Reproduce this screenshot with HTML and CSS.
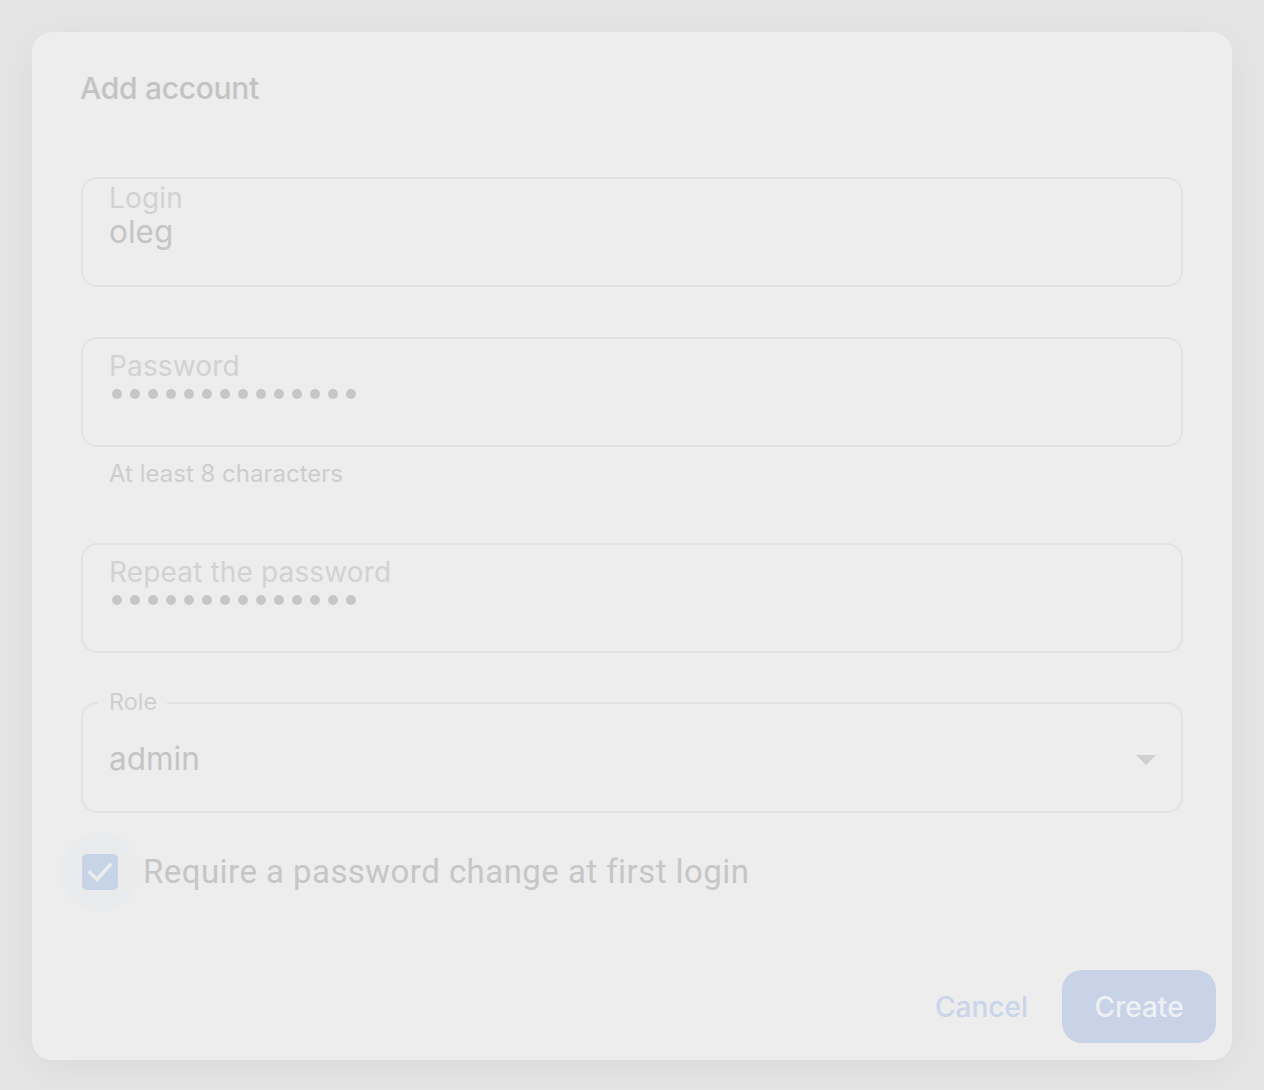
FILE: index.html
```html
<!DOCTYPE html>
<html lang="en">
<head>
<meta charset="utf-8">
<title>Add account</title>
<link rel="stylesheet" href="styles.css">
</head>
<body>
<div class="dialog">
  <h1 class="title">Add account</h1>

  <div class="field field-login">
    <div class="field-label">Login</div>
    <div class="field-value">oleg</div>
  </div>

  <div class="field field-pass">
    <div class="field-label">Password</div>
    <div class="dots"><span></span><span></span><span></span><span></span><span></span><span></span><span></span><span></span><span></span><span></span><span></span><span></span><span></span><span></span></div>
  </div>
  <div class="helper">At least 8 characters</div>

  <div class="field field-pass field-repeat">
    <div class="field-label">Repeat the password</div>
    <div class="dots"><span></span><span></span><span></span><span></span><span></span><span></span><span></span><span></span><span></span><span></span><span></span><span></span><span></span><span></span></div>
  </div>

  <div class="select">
    <span class="legend">Role</span>
    <span class="select-value">admin</span>
    <span class="arrow"></span>
  </div>

  <label class="check-row">
    <span class="checkbox">
      <svg viewBox="0 0 36 36" width="36" height="36"><path d="M8 18.5 L15 25.5 L28 11" fill="none" stroke="#ededed" stroke-width="3.4" stroke-linecap="square"/></svg>
    </span>
    <span class="check-label">Require a password change at first login</span>
  </label>

  <div class="actions">
    <button class="btn-text">Cancel</button>
    <button class="btn-primary">Create</button>
  </div>
</div>
</body>
</html>
```

FILE: styles.css
```css
html, body {
  margin: 0;
  padding: 0;
  background: #e5e5e5;
  font-family: Inter, "Noto Sans", sans-serif;
}

.dialog {
  box-sizing: border-box;
  width: 1200px;
  height: 1028px;
  margin: 32px;
  padding: 38px 49px 17px 49px;
  background: #ededed;
  border-radius: 20px;
  box-shadow: 0 8px 40px rgba(0, 0, 0, 0.05);
  display: flex;
  flex-direction: column;
}

.title {
  margin: 0;
  font-size: 30px;
  line-height: 36px;
  font-weight: 500;
  color: #c3c3c3;
  letter-spacing: -0.3px;
  margin-left: -1px;
}

.field {
  box-sizing: border-box;
  height: 110px;
  border: 2px solid #e2e2e2;
  border-radius: 16px;
  padding: 0 26px;
}

.field-login {
  margin-top: 71px;
  padding-top: 4px;
}

.field-label {
  font-size: 28px;
  line-height: 33px;
  letter-spacing: 0.15px;
  color: #d2d2d2;
}

.field-login .field-label {
  line-height: 30px;
}

.field-value {
  font-size: 31.5px;
  line-height: 38px;
  color: #c5c5c5;
}

.field-pass {
  margin-top: 50px;
  padding-top: 11px;
}

.field-repeat {
  margin-top: 55px;
}

.dots {
  display: flex;
  gap: 8px;
  margin-top: 6px;
  padding-left: 3px;
}

.dots span {
  width: 10px;
  height: 10px;
  border-radius: 50%;
  background: #c6c6c6;
}

.helper {
  margin-top: 12px;
  padding-left: 28px;
  font-size: 24px;
  line-height: 29px;
  color: #cdcdcd;
}

.select {
  position: relative;
  box-sizing: border-box;
  height: 111px;
  margin-top: 49px;
  border: 2px solid #e2e2e2;
  border-radius: 16px;
  padding: 2px 25px 0 26px;
  display: flex;
  align-items: center;
  justify-content: space-between;
}

.legend {
  position: absolute;
  top: -15px;
  left: 15px;
  padding: 0 10px 0 11px;
  background: #ededed;
  font-size: 23.4px;
  line-height: 26px;
  color: #cfcfcf;
}

.select-value {
  font-size: 31.5px;
  line-height: 38px;
  color: #c4c4c4;
}

.arrow {
  width: 0;
  height: 0;
  border-left: 10px solid transparent;
  border-right: 10px solid transparent;
  border-top: 10px solid #d0d0d0;
  margin-top: 2px;
}

.check-row {
  display: flex;
  align-items: center;
  gap: 25px;
  margin-top: 39px;
  padding-left: 1px;
}

.checkbox {
  position: relative;
  width: 36px;
  height: 36px;
  border-radius: 5px;
  background: #c8d3e7;
  display: block;
}

.checkbox::before {
  content: "";
  position: absolute;
  left: -22px;
  top: -22px;
  width: 80px;
  height: 80px;
  border-radius: 50%;
  background: rgba(200, 211, 231, 0.05);
}

.checkbox svg {
  position: relative;
  display: block;
}

.check-label {
  font-family: Roboto, "Liberation Sans", sans-serif;
  font-size: 33px;
  line-height: 39px;
  letter-spacing: 0.45px;
  color: #c6c6c6;
}

.actions {
  margin-top: auto;
  margin-right: -33px;
  display: flex;
  justify-content: flex-end;
  align-items: center;
}

.actions button {
  font-family: Inter, "Noto Sans", sans-serif;
  font-size: 28px;
  font-weight: 500;
  border: none;
  cursor: pointer;
}

.btn-text {
  background: transparent;
  color: #cad5ea;
  padding: 0;
  margin-right: 34px;
}

.btn-primary {
  width: 154px;
  height: 73px;
  border-radius: 20px;
  background: #c8d3e7;
  color: #eef0f4;
  padding: 0;
}
```
